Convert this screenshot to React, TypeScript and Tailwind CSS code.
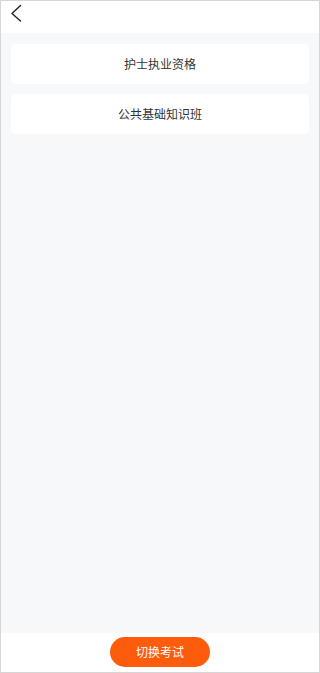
import React from "react";

export default function App() {
  const items = ["护士执业资格", "公共基础知识班"];
  return (
    <div
      className="w-[320px] h-[673px] flex flex-col border border-[#d6d6d6] bg-[#f7f8fa] overflow-hidden"
      style={{ fontFamily: '"Noto Sans CJK SC", "Noto Sans", sans-serif' }}
    >
      <div className="h-[32px] bg-white flex items-start pl-[9px] pt-[3px] shrink-0">
        <svg width="12" height="18" viewBox="0 0 12 18" fill="none">
          <path d="M10.5 1.5 L2 9.5 L10.5 17" stroke="#222" strokeWidth="1.4" strokeLinecap="round" strokeLinejoin="round" />
        </svg>
      </div>
      <div className="flex-1 flex flex-col gap-[10px] px-[10px] pt-[11px]">
        {items.map((t) => (
          <div
            key={t}
            className="h-[40px] bg-white rounded-[5px] flex items-center justify-center text-[12px] text-[#333]"
          >
            {t}
          </div>
        ))}
      </div>
      <div className="h-[39px] bg-white flex justify-center pt-[4px] shrink-0">
        <div className="w-[100px] h-[30px] rounded-full bg-[#fc5c0c] text-white text-[12px] flex items-center justify-center">
          切换考试
        </div>
      </div>
    </div>
  );
}
